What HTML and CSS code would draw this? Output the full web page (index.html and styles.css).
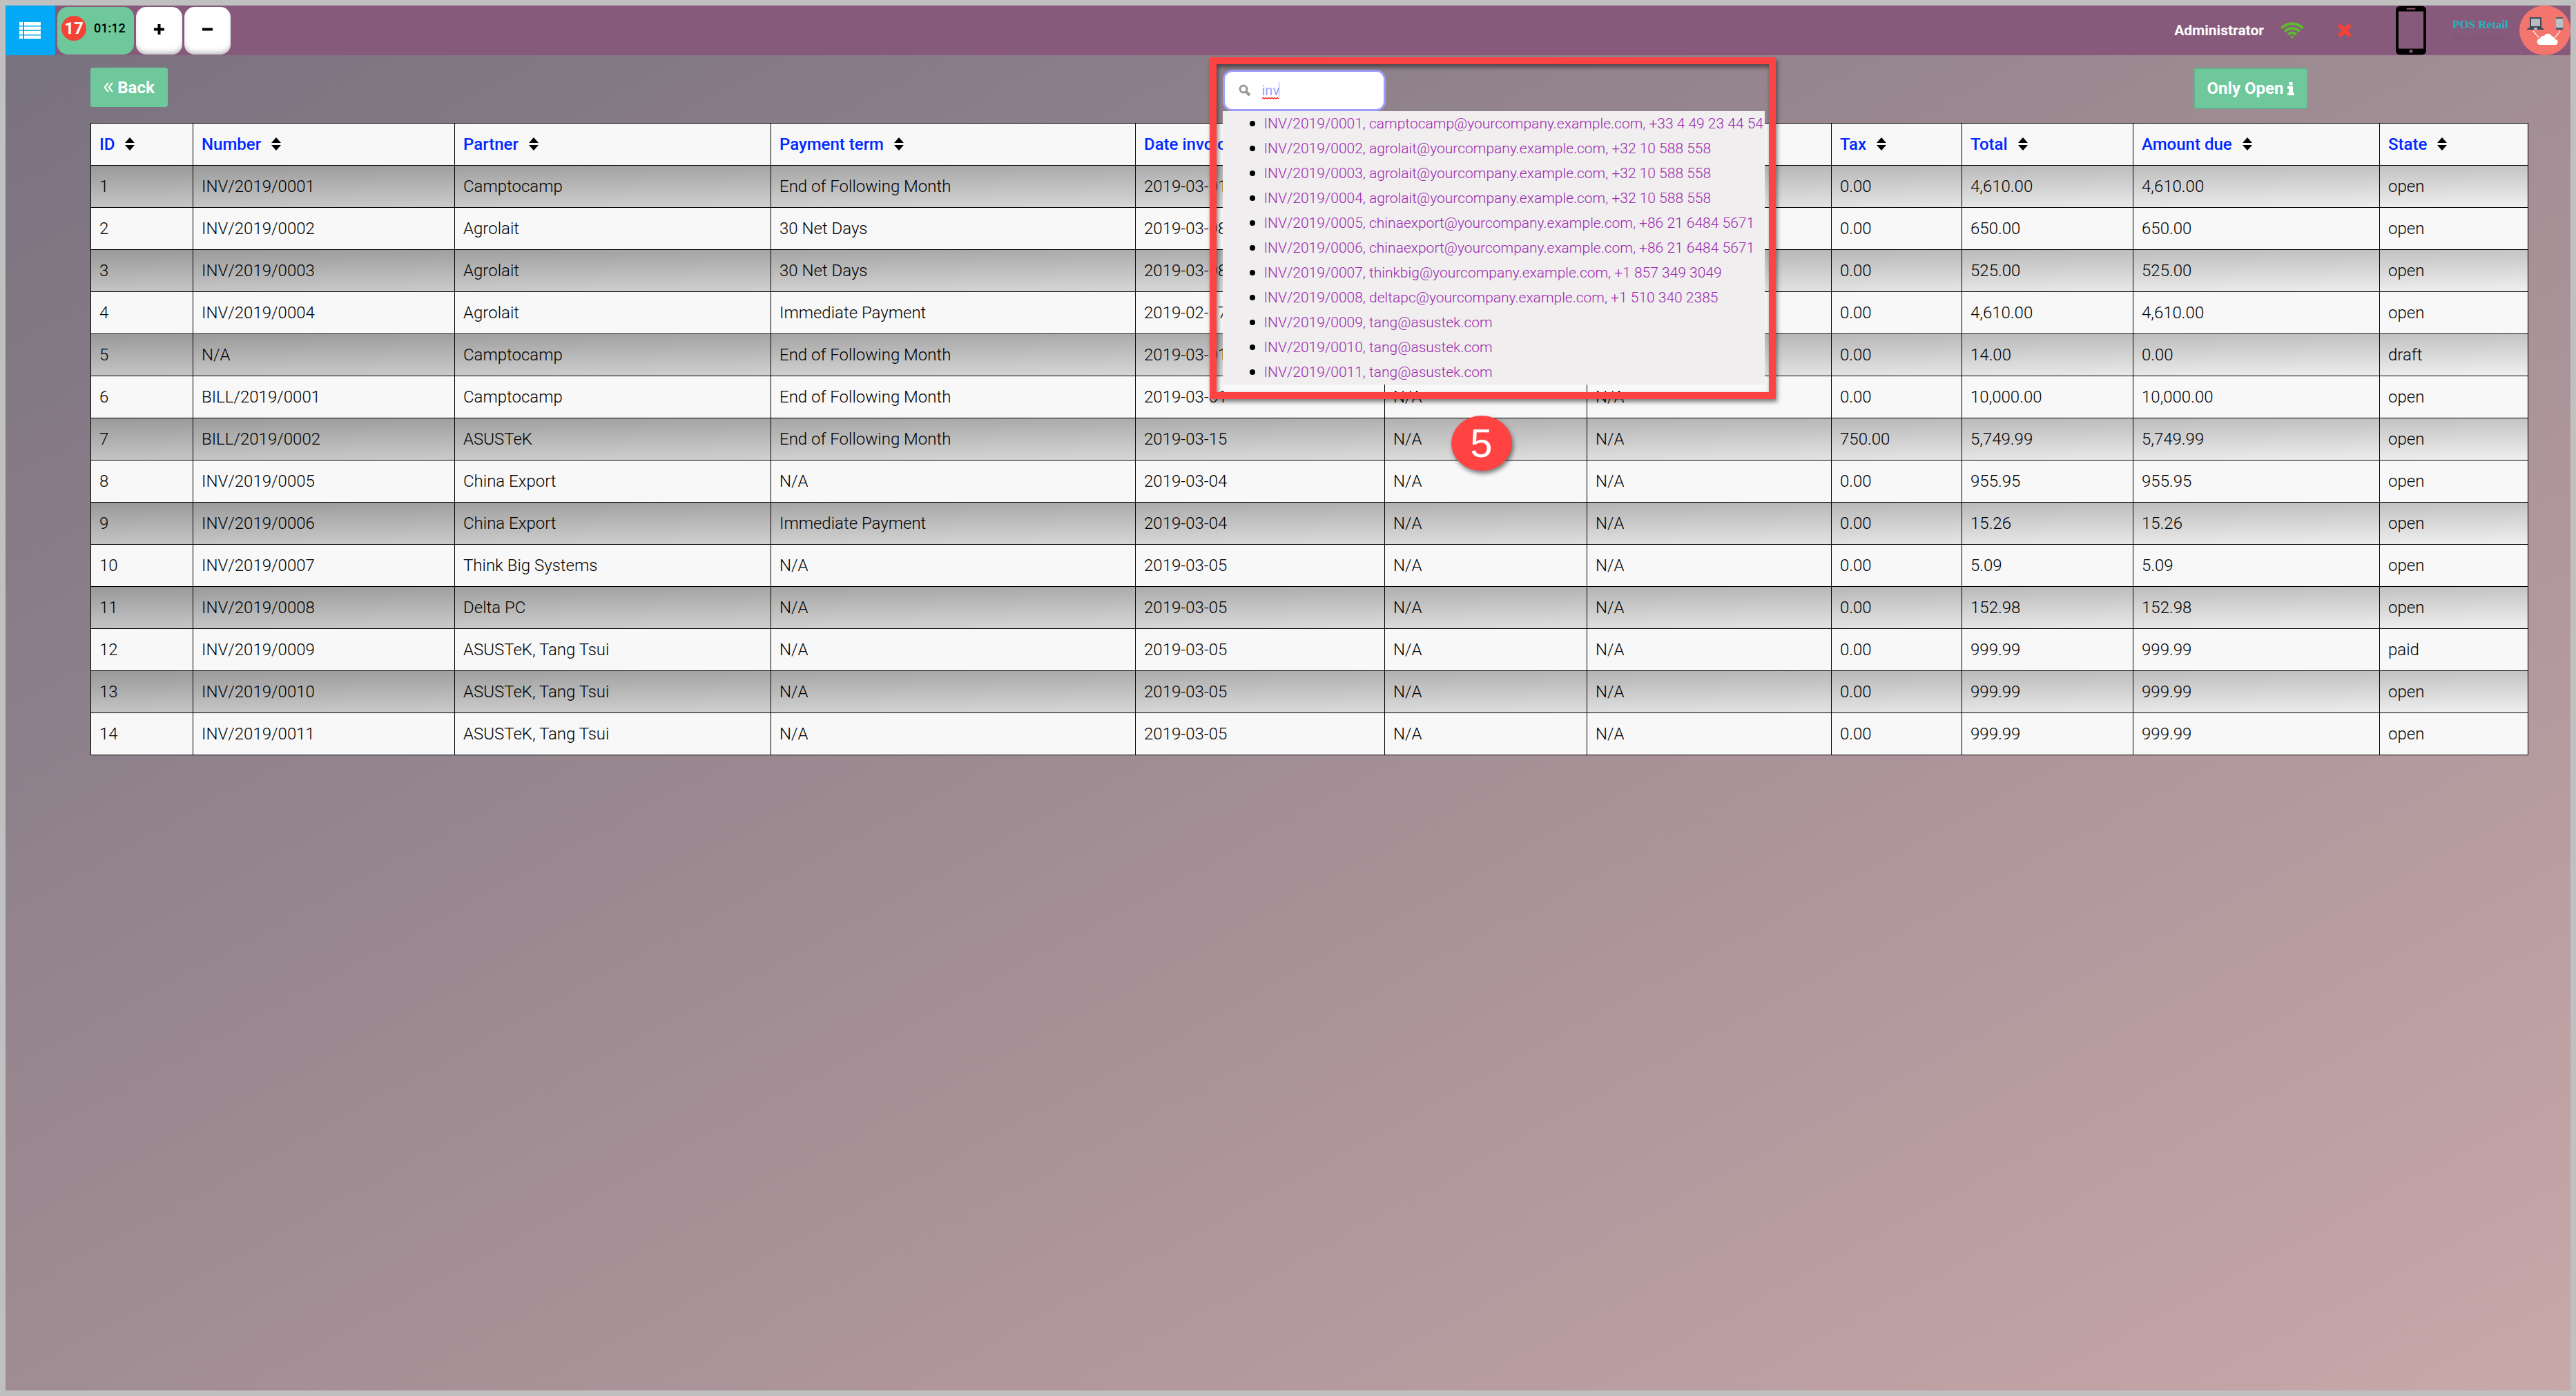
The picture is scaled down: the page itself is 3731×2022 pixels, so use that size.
FILE: index.html
```html
<!DOCTYPE html>
<html lang="en">
<head>
<meta charset="utf-8">
<title>POS Retail - Invoices</title>
<link rel="stylesheet" href="styles.css">
</head>
<body>
<svg class="sprite" width="0" height="0" aria-hidden="true"><symbol id="sort" viewBox="0 0 14 19"><path d="M7 0l7 8H0zM7 19l7-8H0z"/></symbol></svg>
<header class="topbar">
  <button class="menu-btn" type="button" aria-label="Orders list">
    <svg width="32" height="24" viewBox="0 0 32 24" fill="#fff"><path d="M0 0h5v5H0zM7 0h24v5H7zM0 6.500h5v5H0zM7 6.500h24v5H7zM0 13h5v5H0zM7 13h24v5H7zM0 19.500h5v4.500H0zM7 19.500h24v4.500H7z"/></svg>
  </button>
  <button class="order-btn" type="button"><span class="order-count">17</span><span class="order-time">01:12</span></button>
  <button class="square-btn" type="button" aria-label="New order"><svg width="15" height="15" viewBox="0 0 15 15"><path d="M5.500 0h4v5.500H15v4H9.500V15h-4V9.500H0v-4h5.500z"/></svg></button>
  <button class="square-btn" type="button" aria-label="Delete order"><svg width="15" height="15" viewBox="0 0 15 15"><path d="M0 5.500h15v4H0z"/></svg></button>
  <div class="status">
    <span class="username">Administrator</span>
    <svg class="wifi" width="34" height="24" viewBox="0 0 34 24" fill="none" stroke="#5fb832" stroke-width="4.200"><path d="M1.500 8.800a22 22 0 0 1 31 0"/><path d="M6.300 13.500a15 15 0 0 1 21.400 0"/><path d="M11 18a8.500 8.500 0 0 1 12 0"/><path d="M14 21a4.500 4.500 0 0 1 6 0l-3 3z" fill="#5fb832" stroke="none"/></svg>
    <svg class="cross" width="20" height="20" viewBox="0 0 20 20"><path d="M4 0.500L10 6.200 16 0.500 19.500 4 13.800 10 19.500 16 16 19.500 10 13.800 4 19.500 0.500 16 6.200 10 0.500 4z" fill="#f44336" stroke="#f44336" stroke-linejoin="round"/></svg>
    <svg class="phone" width="44" height="72" viewBox="0 0 45 72"><path fill-rule="evenodd" d="M6 0h33a6 6 0 0 1 6 6v60a6 6 0 0 1-6 6H6a6 6 0 0 1-6-6V6a6 6 0 0 1 6-6zM4 8v55h37V8zM16 3v2h13V3zM22.500 64.500a2.500 2.500 0 1 0 .1 0z"/></svg>
    <div class="brand"><span class="brand-name">POS Retail</span><span class="brand-sub">2018 @ TL Technology</span></div>
    <svg class="cloud-logo" width="74" height="72" viewBox="0 0 74 72"><ellipse cx="37" cy="36" rx="37" ry="36" fill="#f3756d"/><path d="M16 18h15v13H16z" fill="#b7bcc0" stroke="#3c4a58" stroke-width="2"/><path d="M14 32h19l3 3H10z" fill="#3c4a58"/><path d="M21 32h5v3h-5z" fill="#b7bcc0"/><path d="M53 17h10v18H53z" fill="#4c5965"/><path d="M53 19h10v13H53z" fill="#bdc1c4"/><path d="M20 37l9 10M59 37l-7 9" stroke="#fff" stroke-dasharray="3 1" stroke-width="1.500"/><path d="M30 57a4.500 4.500 0 0 1 0-9 5 5 0 0 1 6-4 6 6 0 0 1 11 1 5 5 0 0 1 5 4 4 4 0 0 1-1 8z" fill="#fff"/></svg>
  </div>
</header>
<main class="screen">
  <div class="toolbar">
    <button class="back-btn" type="button"><svg width="14" height="15" viewBox="0 0 14 15" fill="none" stroke="#fff" stroke-width="2"><path d="M7 1L1.500 7.500 7 14M13 1L7.500 7.500 13 14"/></svg>Back</button>
    <div class="search">
      <svg class="search-icon" width="18" height="18" viewBox="0 0 18 18" fill="none" stroke="#999"><circle cx="7" cy="7" r="5" stroke-width="3"/><path d="M11 11l5 5" stroke-width="4"/></svg>
      <input class="search-input" type="text" value="inv" aria-label="Search invoices">
      <svg class="typing" width="25" height="25" viewBox="0 0 25 25" fill="none"><path d="M24.500 0v22" stroke="#9f9cff"/><path d="M0 24l2-1.500 2 1.500 2-1.500 2 1.500 2-1.500 2 1.500 2-1.500 2 1.500 2-1.500 2 1.500 2-1.500 2 1.500" stroke="#f00" stroke-width="1.300"/></svg>
      <ul class="suggestions">
        <li>INV/2019/0001, camptocamp@yourcompany.example.com, +33 4 49 23 44 54</li>
        <li>INV/2019/0002, agrolait@yourcompany.example.com, +32 10 588 558</li>
        <li>INV/2019/0003, agrolait@yourcompany.example.com, +32 10 588 558</li>
        <li>INV/2019/0004, agrolait@yourcompany.example.com, +32 10 588 558</li>
        <li>INV/2019/0005, chinaexport@yourcompany.example.com, +86 21 6484 5671</li>
        <li>INV/2019/0006, chinaexport@yourcompany.example.com, +86 21 6484 5671</li>
        <li>INV/2019/0007, thinkbig@yourcompany.example.com, +1 857 349 3049</li>
        <li>INV/2019/0008, deltapc@yourcompany.example.com, +1 510 340 2385</li>
        <li>INV/2019/0009, tang@asustek.com</li>
        <li>INV/2019/0010, tang@asustek.com</li>
        <li>INV/2019/0011, tang@asustek.com</li>
      </ul>
      <div class="callout"></div>
      <div class="callout-number">5</div>
    </div>
    <button class="open-btn" type="button">Only Open <svg width="10" height="19" viewBox="0 0 10 19" fill="#fff"><path d="M2.500 0h5v4.500h-5zM0 6h8v9.500h2V19H0v-3.500h2V9.500H0z"/></svg></button>
  </div>
  <table class="invoices">
    <colgroup><col class="c-id"><col class="c-number"><col class="c-partner"><col class="c-term"><col class="c-date"><col class="c-due"><col class="c-origin"><col class="c-tax"><col class="c-total"><col class="c-amount"><col class="c-state"></colgroup>
    <thead><tr><th>ID<svg class="sort"><use href="#sort"/></svg></th><th>Number<svg class="sort"><use href="#sort"/></svg></th><th>Partner<svg class="sort"><use href="#sort"/></svg></th><th>Payment term<svg class="sort"><use href="#sort"/></svg></th><th>Date invoice<svg class="sort"><use href="#sort"/></svg></th><th></th><th></th><th>Tax<svg class="sort"><use href="#sort"/></svg></th><th>Total<svg class="sort"><use href="#sort"/></svg></th><th>Amount due<svg class="sort"><use href="#sort"/></svg></th><th>State<svg class="sort"><use href="#sort"/></svg></th></tr></thead>
    <tbody>
      <tr><td>1</td><td>INV/2019/0001</td><td>Camptocamp</td><td>End of Following Month</td><td>2019-03-01</td><td>N/A</td><td>N/A</td><td>0.00</td><td>4,610.00</td><td>4,610.00</td><td>open</td></tr>
      <tr><td>2</td><td>INV/2019/0002</td><td>Agrolait</td><td>30 Net Days</td><td>2019-03-08</td><td>N/A</td><td>N/A</td><td>0.00</td><td>650.00</td><td>650.00</td><td>open</td></tr>
      <tr><td>3</td><td>INV/2019/0003</td><td>Agrolait</td><td>30 Net Days</td><td>2019-03-08</td><td>N/A</td><td>N/A</td><td>0.00</td><td>525.00</td><td>525.00</td><td>open</td></tr>
      <tr><td>4</td><td>INV/2019/0004</td><td>Agrolait</td><td>Immediate Payment</td><td>2019-02-17</td><td>N/A</td><td>N/A</td><td>0.00</td><td>4,610.00</td><td>4,610.00</td><td>open</td></tr>
      <tr><td>5</td><td>N/A</td><td>Camptocamp</td><td>End of Following Month</td><td>2019-03-01</td><td>N/A</td><td>N/A</td><td>0.00</td><td>14.00</td><td>0.00</td><td>draft</td></tr>
      <tr><td>6</td><td>BILL/2019/0001</td><td>Camptocamp</td><td>End of Following Month</td><td>2019-03-01</td><td>N/A</td><td>N/A</td><td>0.00</td><td>10,000.00</td><td>10,000.00</td><td>open</td></tr>
      <tr><td>7</td><td>BILL/2019/0002</td><td>ASUSTeK</td><td>End of Following Month</td><td>2019-03-15</td><td>N/A</td><td>N/A</td><td>750.00</td><td>5,749.99</td><td>5,749.99</td><td>open</td></tr>
      <tr><td>8</td><td>INV/2019/0005</td><td>China Export</td><td>N/A</td><td>2019-03-04</td><td>N/A</td><td>N/A</td><td>0.00</td><td>955.95</td><td>955.95</td><td>open</td></tr>
      <tr><td>9</td><td>INV/2019/0006</td><td>China Export</td><td>Immediate Payment</td><td>2019-03-04</td><td>N/A</td><td>N/A</td><td>0.00</td><td>15.26</td><td>15.26</td><td>open</td></tr>
      <tr><td>10</td><td>INV/2019/0007</td><td>Think Big Systems</td><td>N/A</td><td>2019-03-05</td><td>N/A</td><td>N/A</td><td>0.00</td><td>5.09</td><td>5.09</td><td>open</td></tr>
      <tr><td>11</td><td>INV/2019/0008</td><td>Delta PC</td><td>N/A</td><td>2019-03-05</td><td>N/A</td><td>N/A</td><td>0.00</td><td>152.98</td><td>152.98</td><td>open</td></tr>
      <tr><td>12</td><td>INV/2019/0009</td><td>ASUSTeK, Tang Tsui</td><td>N/A</td><td>2019-03-05</td><td>N/A</td><td>N/A</td><td>0.00</td><td>999.99</td><td>999.99</td><td>paid</td></tr>
      <tr><td>13</td><td>INV/2019/0010</td><td>ASUSTeK, Tang Tsui</td><td>N/A</td><td>2019-03-05</td><td>N/A</td><td>N/A</td><td>0.00</td><td>999.99</td><td>999.99</td><td>open</td></tr>
      <tr><td>14</td><td>INV/2019/0011</td><td>ASUSTeK, Tang Tsui</td><td>N/A</td><td>2019-03-05</td><td>N/A</td><td>N/A</td><td>0.00</td><td>999.99</td><td>999.99</td><td>open</td></tr>
    </tbody>
  </table>
</main>
</body>
</html>
```
FILE: styles.css
```css
* { box-sizing: border-box; }
html { height: 100%; }
body {
  margin: 0;
  min-height: 100%;
  border: 8px solid #c0c0c0;
  background: linear-gradient(to right bottom, #77717e, #c9a8a9);
  background-origin: border-box;
  font-family: Roboto, "Liberation Sans", sans-serif;
  font-weight: 300;
  font-size: 24px;
  line-height: 36px;
  color: #000;
}
button { font: inherit; border: 0; padding: 0; cursor: pointer; }
svg { display: block; flex: none; }

.topbar {
  display: flex;
  align-items: center;
  gap: 3px;
  height: 72px;
  background: #875a7b;
}
.menu-btn {
  display: flex;
  align-items: center;
  justify-content: center;
  width: 72px;
  height: 72px;
  background: #03a9f4;
}
.order-btn {
  display: flex;
  align-items: center;
  gap: 11px;
  width: 111px;
  height: 69px;
  padding: 0 0 6px 6px;
  border-radius: 15px;
  background: #6ec89b;
  font-weight: 700;
}
.order-count {
  width: 36px;
  height: 36px;
  border-radius: 50%;
  background: #f44336;
  color: #fff;
}
.order-time { font-size: 18px; font-weight: 500; color: #000; }
.square-btn {
  display: flex;
  align-items: center;
  justify-content: center;
  width: 67px;
  height: 69px;
  padding-bottom: 4px;
  border-radius: 15px;
  background: #fff;
  box-shadow: inset 0 -6px 8px -4px #aaa;
}
.status { display: flex; align-items: center; height: 72px; margin-left: auto; }
.username { font-size: 21px; font-weight: 700; color: #fff; }
.wifi { margin-left: 24px; }
.cross { margin-left: 49px; }
.phone { margin-left: 64px; }
.brand {
  display: flex;
  flex-direction: column;
  width: 75px;
  margin: 0 22px 0 38px;
  text-align: center;
  white-space: nowrap;
}
.brand-name { font: 700 17px/24px "Liberation Serif", serif; color: #26b6bd; }
.brand-sub { font: 8px/16px "Liberation Serif", serif; color: #7a5470; }

.screen { padding: 18px 65px 0 123px; }
.toolbar {
  display: grid;
  grid-template-columns: 1fr 236px 1fr;
  align-items: start;
  height: 80px;
  padding-right: 12px;
}
.back-btn, .open-btn {
  display: flex;
  align-items: center;
  justify-content: center;
  gap: 6px;
  height: 57px;
  border-radius: 4px;
  background: #6ec89b;
  color: #fff;
  font-weight: 700;
}
.back-btn { width: 112px; }
.open-btn { width: 166px; height: 60px; border: 2px solid #64af8a; justify-self: end; margin-right: 303px; }

.search { position: relative; margin-top: 3px; }
.search-input {
  display: block;
  width: 100%;
  height: 60px;
  padding: 0 12px 0 54px;
  border: 3px solid #9f9cff;
  border-radius: 14px;
  background: #fff;
  font: inherit;
  font-size: 20px;
  font-weight: 400;
  color: #9f9cff;
}
.search-icon { position: absolute; left: 23px; top: 21px; }
.typing { position: absolute; left: 57px; top: 18px; }
.suggestions {
  position: absolute;
  left: 0;
  top: 60px;
  z-index: 1;
  width: 785px;
  margin: 0;
  padding: 0 0 0 39px;
  background: #f0eeee;
  font-size: 21px;
  color: #9c27b0;
  white-space: nowrap;
  list-style: none;
}
.suggestions li { display: flex; align-items: center; gap: 13px; }
.suggestions li::before { content: ""; width: 8px; height: 8px; border-radius: 50%; background: #000; }
.callout {
  position: absolute;
  z-index: 2;
  left: -19px;
  top: -18px;
  width: 820px;
  height: 495px;
  border: 10px solid #ff4343;
  box-shadow: 2px 4px 6px rgba(0,0,0,.5), inset 2px 4px 6px rgba(0,0,0,.5);
}
.callout-number {
  position: absolute;
  z-index: 2;
  left: 331px;
  top: 501px;
  width: 88px;
  height: 80px;
  border-radius: 50%;
  background: #ff4343;
  box-shadow: 2px 4px 6px rgba(0,0,0,.5);
  color: #fff;
  font: 58px/80px "Liberation Sans", sans-serif;
  text-align: center;
}

.invoices { width: 100%; table-layout: fixed; border-collapse: collapse; background: #f8f8f8; }
.invoices th, .invoices td { height: 61px; padding: 0 12px; border: 1px solid #000; text-align: left; white-space: nowrap; }
.invoices th { color: #0028ff; font-weight: 500; }
.invoices tbody tr:nth-child(odd) { background: linear-gradient(to right bottom, #999, #f0f0f0); }
.sprite { position: absolute; }
.sort { display: inline-block; width: 14px; height: 19px; margin-left: 15px; vertical-align: -1px; fill: #000; }
.c-id { width: 148px; }
.c-number { width: 379px; }
.c-partner { width: 458px; }
.c-term { width: 528px; }
.c-date { width: 361px; }
.c-due { width: 293px; }
.c-origin { width: 354px; }
.c-tax { width: 189px; }
.c-total { width: 248px; }
.c-amount { width: 357px; }
.c-state { width: 215px; }
```
